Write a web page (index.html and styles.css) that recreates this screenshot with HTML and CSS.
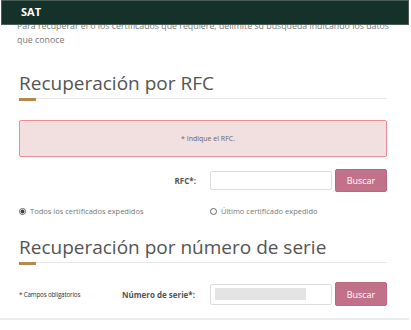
FILE: index.html
```html
<!DOCTYPE html>
<html lang="es">
<head>
    <meta charset="UTF-8">
    <meta name="viewport" content="width=device-width, initial-scale=1.0">
    <title>SAT - Recuperación de certificados</title>
    <link rel="stylesheet" href="styles.css">
</head>
<body>
    <header class="topbar">
        <span class="brand">SAT</span>
    </header>

    <main class="page">
        <p class="intro">Para recuperar el o los certificados que requiere, delimite su búsqueda indicando los datos que conoce</p>

        <h2 class="section-title">Recuperación por RFC</h2>
        <div class="rule"></div>

        <div class="alert">* Indique el RFC.</div>

        <div class="form-row">
            <label class="field-label" for="rfc">RFC*:</label>
            <input class="field-input" type="text" id="rfc">
            <button class="btn-search">Buscar</button>
        </div>

        <div class="radio-row">
            <label class="radio-option first">
                <span class="radio checked"></span>
                Todos los certificados expedidos
            </label>
            <label class="radio-option">
                <span class="radio"></span>
                Último certificado expedido
            </label>
        </div>

        <h2 class="section-title second">Recuperación por número de serie</h2>
        <div class="rule"></div>

        <div class="form-row serie-row">
            <span class="required-note">* Campos obligatorios</span>
            <label class="field-label" for="serie">Número de serie*:</label>
            <div class="field-input filled" id="serie">
                <span class="masked"></span>
            </div>
            <button class="btn-search">Buscar</button>
        </div>
    </main>

    <div class="bottom-line"></div>
</body>
</html>
```

FILE: styles.css
```css
body {
    margin: 0;
    background: #fff;
    font-family: "Open Sans", "Noto Sans", sans-serif;
    color: #666;
}

.topbar {
    position: fixed;
    top: 0;
    left: 1px;
    right: 2px;
    height: 25px;
    background-color: #15322a;
    border: 1px solid #4a5e57;
    box-sizing: border-box;
    z-index: 2;
}

.brand {
    display: block;
    padding: 4px 0 0 19px;
    color: #fff;
    font-size: 11px;
    font-weight: 700;
    line-height: 14px;
}

.page {
    padding: 0 24px 0 19px;
}

.intro {
    margin: 19px -10px 0 -2px;
    font-size: 8.8px;
    line-height: 14px;
    color: #777;
}

.section-title {
    margin: 25px 0 0;
    padding-bottom: 4px;
    font-size: 19px;
    line-height: 22px;
    font-weight: 400;
    color: #545454;
}

.section-title.second {
    margin-top: 18px;
}

.rule {
    height: 1px;
    background-color: #e8e8e8;
}

.rule::before {
    content: '';
    display: block;
    width: 17px;
    height: 3px;
    background-color: #b4894f;
}

.alert {
    margin-top: 21px;
    height: 37px;
    padding-left: 10px;
    box-sizing: border-box;
    border: 1px solid #ec8c95;
    border-radius: 2px;
    background-color: #f2dfe0;
    display: flex;
    align-items: center;
    justify-content: center;
    font-size: 7px;
    color: #666;
}

.form-row {
    margin-top: 12px;
    display: grid;
    grid-template-columns: 1fr 122px 52px;
    column-gap: 3px;
    align-items: center;
    height: 23px;
}

.field-label {
    justify-self: end;
    margin-right: 11px;
    font-size: 8px;
    font-weight: 700;
    color: #555;
}

.field-input {
    height: 19px;
    margin: 0;
    padding: 0 4px;
    box-sizing: border-box;
    border: 1px solid #dcdcdc;
    border-radius: 2px;
    background: #fff;
}

.field-input.filled {
    height: 21px;
    display: flex;
    align-items: center;
}

.masked {
    display: block;
    width: 91px;
    height: 12px;
    background-color: #e4e4e4;
}

.btn-search {
    height: 23px;
    margin: 0;
    padding: 0;
    border: 1px solid #b9687f;
    border-radius: 2px;
    background-color: #c17189;
    color: #fff;
    font-family: inherit;
    font-size: 9px;
}

.radio-row {
    margin-top: 12px;
    display: flex;
    height: 14px;
    align-items: center;
    font-size: 7.5px;
    color: #777;
}

.radio-option {
    display: flex;
    align-items: center;
    gap: 4px;
}

.radio-option.first {
    width: 191px;
}

.radio {
    width: 7px;
    height: 7px;
    box-sizing: border-box;
    border: 1px solid #666;
    border-radius: 50%;
    background: #fff;
}

.radio.checked {
    background: radial-gradient(circle, #444 0 1.8px, #fff 2.2px);
}

.serie-row {
    margin-top: 19px;
    grid-template-columns: auto 1fr 122px 52px;
    height: 24px;
}

.serie-row .field-label {
    margin-right: 12px;
}

.serie-row .btn-search {
    height: 24px;
}

.required-note {
    font-size: 6.3px;
    color: #333;
    letter-spacing: -0.2px;
}

.bottom-line {
    margin: 12px 2px 0 0;
    height: 2px;
    background-color: #ececec;
}
```
